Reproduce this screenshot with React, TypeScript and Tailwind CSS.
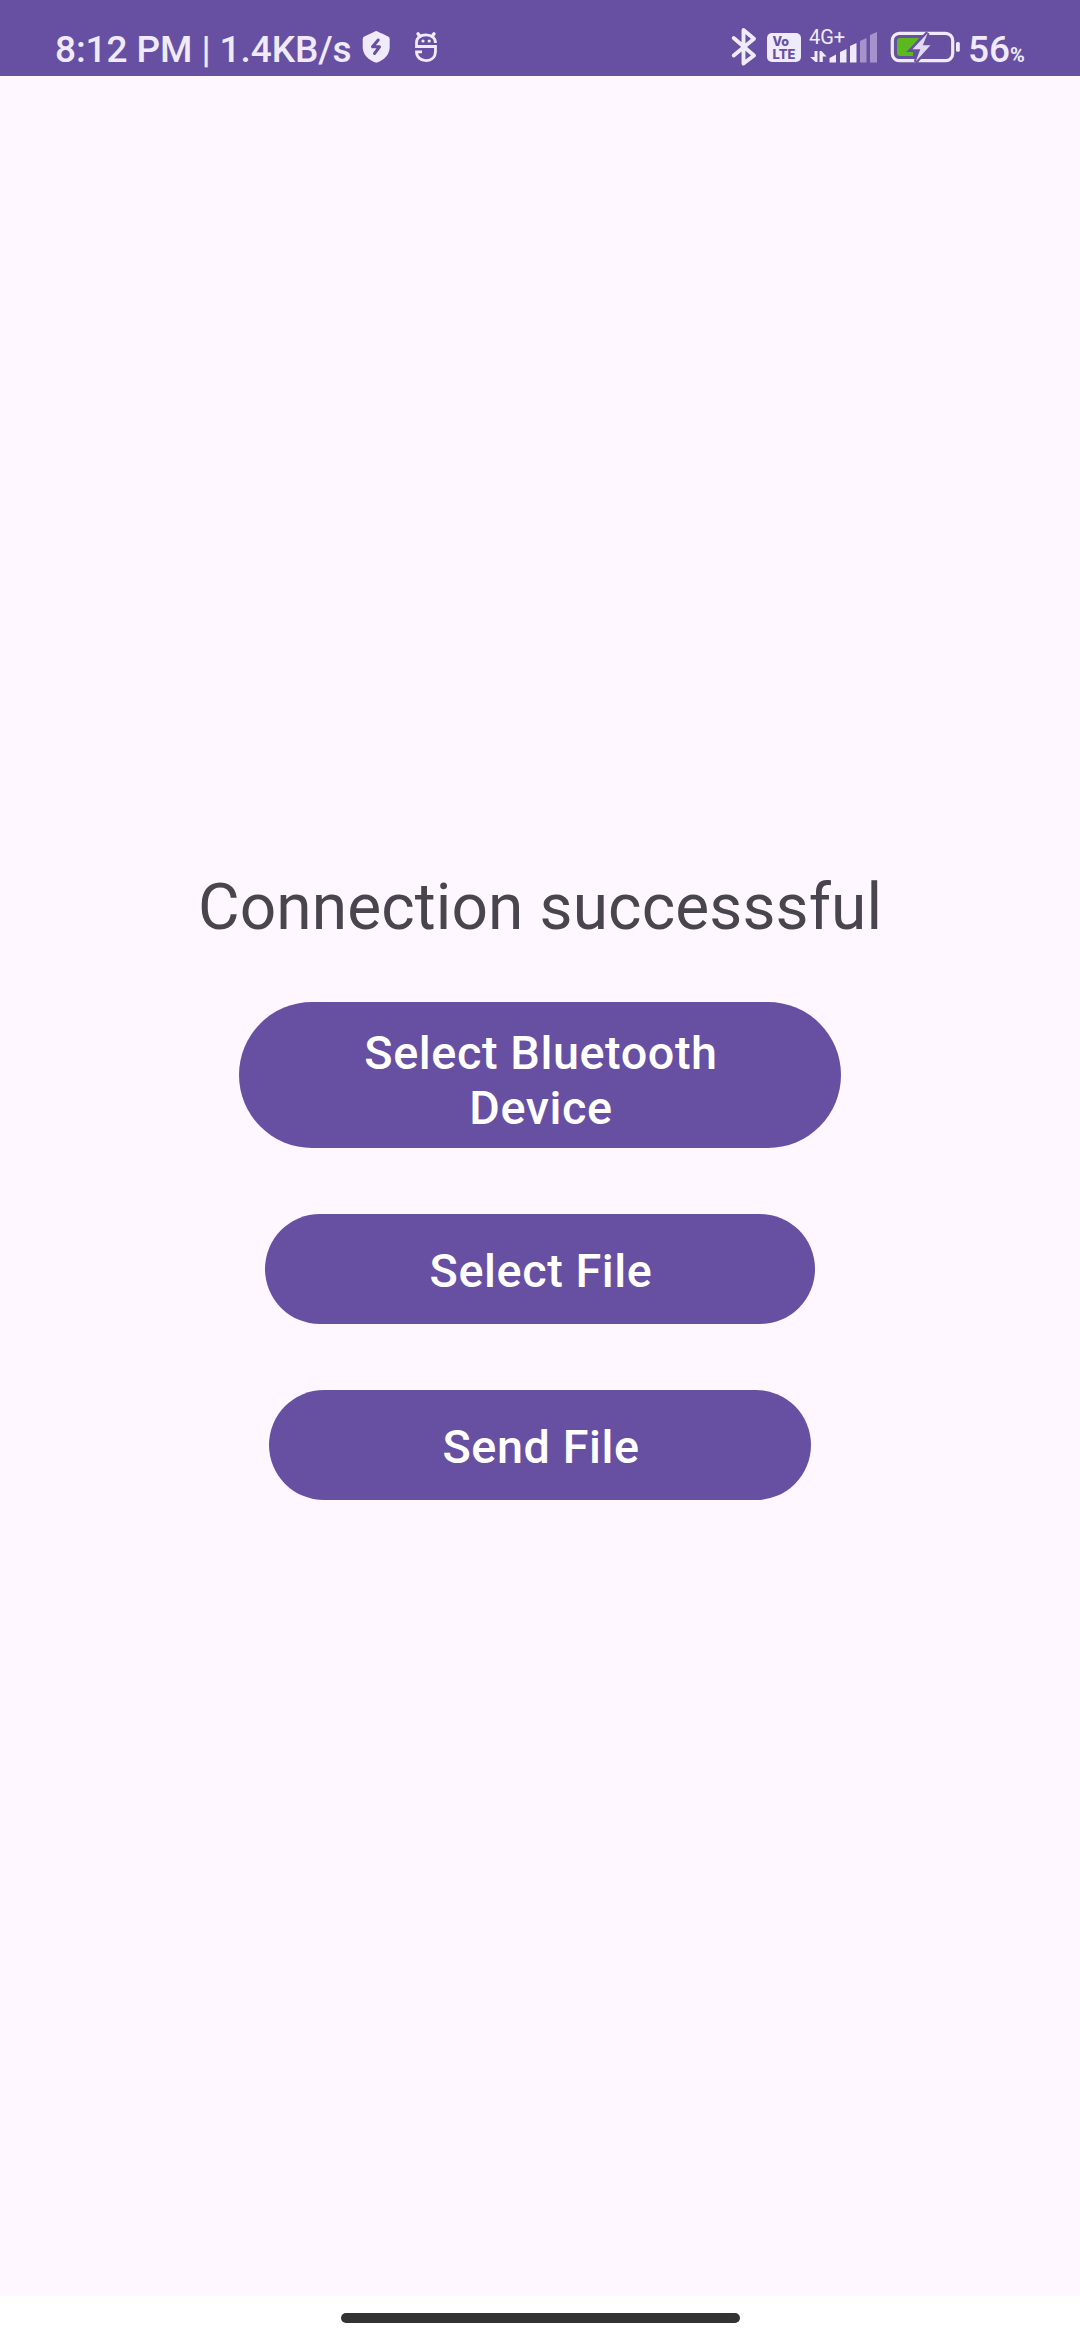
import type { ReactNode } from "react";

function StatusBar() {
  return (
    <header className="flex h-[76px] shrink-0 bg-[#6750a2] text-[#f0ebfa]">
      <div className="mt-[27px] ml-[55px] h-[45px] w-[307px] text-[37px] leading-[45px] font-medium tracking-[-0.1px] whitespace-nowrap">
        8:12 PM | 1.4KB/s
      </div>
      <svg className="mt-[26px] h-[40px] w-[90px] shrink-0" viewBox="362 26 90 40" fill="none">
        <path d="M376 31 Q377 31 388 36.5 Q389.700 37.400 389.700 39 V47 C389.700 54.500 384 60.500 376.300 62.700 C368.500 60.500 362.700 54.500 362.700 47 V39 Q362.700 37.400 364.300 36.500 Z" fill="#f0ebfa" />
        <path d="M378.200 40 L372.500 46.800 H379.500 L374.500 53.500" stroke="#6750a2" strokeWidth="3" strokeLinejoin="round" strokeLinecap="round" />
        <path d="M435.500 43 C435.500 38 431.500 34.800 426 34.800 C420.500 34.800 416.500 38 416.500 42.500 V46.500 H435.500 V51 C435.500 57 431.500 60.600 426 60.600 C420.500 60.600 416.500 57 416.500 51.800 H422" stroke="#f0ebfa" strokeWidth="2.800" />
        <path d="M418 33.800 L420 36.500 M434 33.800 L432 36.500" stroke="#f0ebfa" strokeWidth="3.400" strokeLinecap="round" />
        <circle cx="423" cy="41" r="1.600" fill="#f0ebfa" />
        <circle cx="429.200" cy="41" r="1.600" fill="#f0ebfa" />
      </svg>
      <svg className="mt-[26px] ml-[278px] h-[42px] w-[30px] shrink-0" viewBox="730 26 30 42" fill="none">
        <path d="M733.700 38 L754 55.500 L743.500 63.500 V30 L754 38.800 L733.700 55.500" stroke="#f0ebfa" strokeWidth="3.900" strokeLinejoin="round" strokeLinecap="round" />
      </svg>
      <svg className="mt-[33px] ml-[7px] h-[29px] w-[34px] shrink-0" viewBox="767 33 34 29">
        <rect x="767" y="33" width="34" height="29" rx="5" fill="#f0ebfa" />
        <g className="font-[Inter,sans-serif] font-extrabold" fill="#6750a2">
          <text x="772.500" y="46.300" fontSize="12.500">Vo</text>
          <text x="772.500" y="59" fontSize="13">LTE</text>
        </g>
      </svg>
      <svg className="mt-[26px] ml-[8px] h-[40px] w-[70px] shrink-0" viewBox="809 26 70 40">
        <text x="809" y="44" fontSize="20" fill="#f0ebfa">4G+</text>
        <path d="M814.500 51 H817.500 V62 H815.500 L810 57 H814.500 Z M819.500 62 V51 H821.500 L826.500 56.500 H822.800 V62 Z" fill="#f0ebfa" />
        <path d="M829.500 58 L836 54.500 V62.500 H829.500 Z M840 52 L846.500 49 V62.500 H840 Z M850 46 L856.500 43 V62.500 H850 Z" fill="#f0ebfa" />
        <path d="M860 41 L866.500 38 V62.500 H860 Z M870 35 L877 32 V62.500 H870 Z" fill="#a693cb" />
      </svg>
      <svg className="mt-[26px] ml-[9px] h-[40px] w-[76px] shrink-0" viewBox="888 26 76 40" fill="none">
        <rect x="892.300" y="33.400" width="60.400" height="27.200" rx="7" stroke="#f0ebfa" strokeWidth="3.200" />
        <path d="M900 38 H919 L913 46 V56 H900 Q897 56 897 53 V41 Q897 38 900 38 Z" fill="#5bb91f" />
        <path d="M927.700 33 L911 50 H920 L915.700 62 L931 45 H922.500 Z" fill="#6750a2" stroke="#6750a2" strokeWidth="4" />
        <path d="M927.700 33 L912.500 49.300 H920.300 L915.700 61.500 L930.500 45.200 H922.800 Z" fill="#e1d9f2" />
        <rect x="956" y="42" width="3.800" height="9.800" rx="1.500" fill="#f0ebfa" />
      </svg>
      <div className="mt-[27px] ml-[4px] flex items-baseline text-[37px] leading-[45px] font-medium">
        56<span className="text-[20px] font-bold">%</span>
      </div>
    </header>
  );
}

function PillButton({ className, children }: { className: string; children: ReactNode }) {
  return (
    <button className={`flex items-center justify-center rounded-full bg-[#6750a2] pl-[2px] text-center text-[46.75px] leading-[55px] font-medium tracking-[0.0125em] text-white ${className}`}>
      {children}
    </button>
  );
}

export default function App() {
  return (
    <div className="flex h-[2340px] w-[1080px] flex-col bg-[#fef7ff] font-[Roboto,sans-serif]">
      <StatusBar />
      <main className="flex flex-1 flex-col items-center pt-[792px]">
        <h1 className="h-[78px] text-[64px] leading-[79px] tracking-[0.1px] whitespace-nowrap text-[#49454f]">
          Connection successsful
        </h1>
        <div className="mt-[56px] flex flex-col items-center gap-[66px]">
          <PillButton className="h-[146px] w-[602px] pt-[12px]">
            <span>Select Bluetooth<br />Device</span>
          </PillButton>
          <PillButton className="h-[110px] w-[550px] pt-[4px]">Select File</PillButton>
          <PillButton className="h-[110px] w-[542px] pt-[4px]">Send File</PillButton>
        </div>
      </main>
      <footer className="flex h-[44px] shrink-0 justify-center bg-white pt-[17px]">
        <div className="h-[10px] w-[399px] rounded-full bg-[#333333]" />
      </footer>
    </div>
  );
}
